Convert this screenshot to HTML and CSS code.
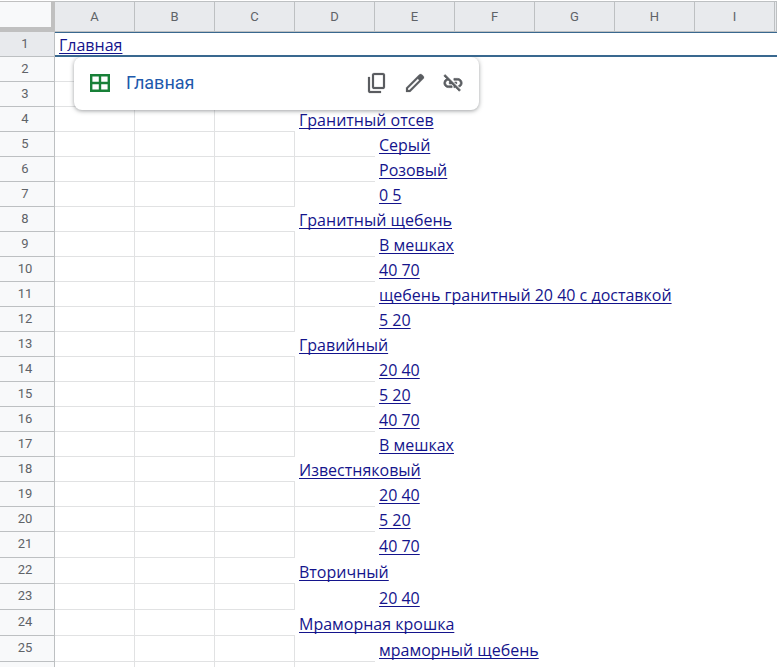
FILE: index.html
```html
<!DOCTYPE html>
<html lang="ru">
<head>
<meta charset="utf-8">
<title>Главная</title>
<link rel="stylesheet" href="styles.css">
</head>
<body>
<div class="sheet">
	<table class="grid">
		<colgroup>
			<col class="col-num">
			<col class="col"><col class="col"><col class="col"><col class="col"><col class="col">
			<col class="col"><col class="col"><col class="col"><col class="col"><col>
		</colgroup>
		<thead>
			<tr><td class="corner"></td><th>A</th><th>B</th><th>C</th><th>D</th><th>E</th><th>F</th><th>G</th><th>H</th><th>I</th><th></th></tr>
		</thead>
		<tbody>
			<tr class="selected"><th>1</th><td class="text" colspan="10"><a href="#">Главная</a></td></tr>
			<tr><th>2</th><td></td><td></td><td></td><td class="gap"></td><td class="text" colspan="6"></td></tr>
			<tr><th>3</th><td></td><td></td><td></td><td class="gap last"></td><td class="text" colspan="6"></td></tr>
			<tr><th>4</th><td></td><td></td><td class="open"></td><td class="text" colspan="7"><a href="#">Гранитный отсев</a></td></tr>
			<tr><th>5</th><td></td><td></td><td></td><td class="gap"></td><td class="text" colspan="6"><a href="#">Серый</a></td></tr>
			<tr><th>6</th><td></td><td></td><td></td><td class="gap"></td><td class="text" colspan="6"><a href="#">Розовый</a></td></tr>
			<tr><th>7</th><td></td><td></td><td></td><td class="gap last"></td><td class="text" colspan="6"><a href="#">0 5</a></td></tr>
			<tr><th>8</th><td></td><td></td><td class="open"></td><td class="text" colspan="7"><a href="#">Гранитный щебень</a></td></tr>
			<tr><th>9</th><td></td><td></td><td></td><td class="gap"></td><td class="text" colspan="6"><a href="#">В мешках</a></td></tr>
			<tr><th>10</th><td></td><td></td><td></td><td class="gap"></td><td class="text" colspan="6"><a href="#">40 70</a></td></tr>
			<tr><th>11</th><td></td><td></td><td></td><td class="gap"></td><td class="text" colspan="6"><a href="#">щебень гранитный 20 40 с доставкой</a></td></tr>
			<tr><th>12</th><td></td><td></td><td></td><td class="gap last"></td><td class="text" colspan="6"><a href="#">5 20</a></td></tr>
			<tr><th>13</th><td></td><td></td><td class="open"></td><td class="text" colspan="7"><a href="#">Гравийный</a></td></tr>
			<tr><th>14</th><td></td><td></td><td></td><td class="gap"></td><td class="text" colspan="6"><a href="#">20 40</a></td></tr>
			<tr><th>15</th><td></td><td></td><td></td><td class="gap"></td><td class="text" colspan="6"><a href="#">5 20</a></td></tr>
			<tr><th>16</th><td></td><td></td><td></td><td class="gap"></td><td class="text" colspan="6"><a href="#">40 70</a></td></tr>
			<tr><th>17</th><td></td><td></td><td></td><td class="gap last"></td><td class="text" colspan="6"><a href="#">В мешках</a></td></tr>
			<tr><th>18</th><td></td><td></td><td class="open"></td><td class="text" colspan="7"><a href="#">Известняковый</a></td></tr>
			<tr><th>19</th><td></td><td></td><td></td><td class="gap"></td><td class="text" colspan="6"><a href="#">20 40</a></td></tr>
			<tr><th>20</th><td></td><td></td><td></td><td class="gap"></td><td class="text" colspan="6"><a href="#">5 20</a></td></tr>
			<tr class="tall"><th>21</th><td></td><td></td><td></td><td class="gap last"></td><td class="text" colspan="6"><a href="#">40 70</a></td></tr>
			<tr class="tall"><th>22</th><td></td><td></td><td class="open"></td><td class="text" colspan="7"><a href="#">Вторичный</a></td></tr>
			<tr class="tall"><th>23</th><td></td><td></td><td></td><td class="gap last"></td><td class="text" colspan="6"><a href="#">20 40</a></td></tr>
			<tr class="tall"><th>24</th><td></td><td></td><td class="open"></td><td class="text" colspan="7"><a href="#">Мраморная крошка</a></td></tr>
			<tr class="tall"><th>25</th><td></td><td></td><td></td><td class="gap"></td><td class="text" colspan="6"><a href="#">мраморный щебень</a></td></tr>
			<tr class="tall"><th></th><td></td><td></td><td></td><td class="gap"></td><td class="text" colspan="6"></td></tr>
		</tbody>
	</table>

	<div class="link-card">
		<svg class="sheet-icon" viewBox="0 0 20 18" width="20" height="18"><path d="M1.2 1.2h17.6v15.6H1.2zM10 1v16M1 9h18"/></svg>
		<a class="link-title" href="#">Главная</a>
		<div class="actions">
			<button type="button" aria-label="Копировать ссылку">
				<svg viewBox="0 0 24 24" width="24" height="24"><path d="M9 18q-.82 0-1.41-.59T7 16V4q0-.82.59-1.41T9 2h9q.82 0 1.41.59T20 4v12q0 .82-.59 1.41T18 18zm0-2h9V4H9zm-4 6q-.82 0-1.41-.59T3 20V6h2v14h11v2z"/></svg>
			</button>
			<button type="button" aria-label="Изменить ссылку">
				<svg viewBox="0 0 24 24" width="24" height="24"><path d="M5 19h1.4L16.2 9.2 14.8 7.8 5 17.6zm-2 2v-4.25L16.2 3.57q.3-.27.66-.42T17.6 3q.4 0 .77.15t.65.45l1.38 1.4q.3.28.44.65T21 6.4q0 .4-.14.76t-.44.67L7.25 21z"/></svg>
			</button>
			<button type="button" aria-label="Удалить ссылку">
				<svg class="unlink" viewBox="0 0 24 24" width="22" height="22"><path d="M17 7h-4v1.9h4c1.71 0 3.1 1.39 3.1 3.1 0 1.43-.98 2.63-2.31 2.98l1.46 1.46C20.88 15.61 22 13.95 22 12c0-2.76-2.24-5-5-5zm-1 4h-2.19l2 2H16zM2 4.27l3.11 3.11A4.991 4.991 0 0 0 2 12c0 2.76 2.24 5 5 5h4v-1.9H7c-1.71 0-3.1-1.39-3.1-3.1 0-1.59 1.21-2.9 2.76-3.07L8.73 11H8v2h2.73L13 15.27V17h1.73l4.01 4L20.15 19.6 3.41 2.86z"/></svg>
			</button>
		</div>
	</div>
</div>
</body>
</html>
```
FILE: styles.css
```css
* {
	box-sizing: border-box;
}
body {
	margin: 0;
	background: #fff;
	font-family: Roboto, "Liberation Sans", sans-serif;
}
.sheet {
	position: relative;
	height: 100vh;
	padding-top: 1px;
	overflow: hidden;
}

/* grid */
.grid {
	width: 100%;
	table-layout: fixed;
	border-collapse: separate;
	border-spacing: 0;
}
.col-num {
	width: 55px;
}
.col {
	width: 80px;
}
th,
td {
	height: 25px;
	padding: 0;
	border: 0 solid #e1e2e3;
	border-width: 0 1px 1px 0;
}
.tall th,
.tall td {
	height: 26px;
}
th {
	border-color: #bdc0c2;
	background: #f8f9fa;
	color: #5f6368;
	font-size: 13px;
	line-height: 16px;
	font-weight: 400;
	text-align: center;
}
tbody th {
	padding: 0 4px 1px 0;
}
thead th {
	height: 31px;
	border-top-width: 1px;
	background: #e8eaed;
}
.corner {
	height: 31px;
	border-color: #c0c0c0;
	border-width: 1px 4px 5px 0;
	background: #f8f9fa;
}
.selected th {
	background: #e8eaed;
}
.open {
	border-right-width: 0;
}
.gap {
	border-right-width: 0;
}
.last {
	border-bottom-width: 0;
}
.text {
	padding: 0 0 2px 4px;
	border-width: 0;
	font-family: "Open Sans", "Noto Sans", sans-serif;
	font-size: 16px;
	line-height: 20px;
	vertical-align: bottom;
	white-space: nowrap;
}
.selected .text {
	padding-bottom: 0;
	border-color: #39688f;
	border-width: 1px 0 2px;
}
.text a {
	color: #14148c;
	text-decoration: underline;
	text-decoration-thickness: 1px;
	text-underline-offset: 2px;
	text-decoration-skip-ink: none;
}

/* link preview */
.link-card {
	position: absolute;
	top: 57px;
	left: 74px;
	display: flex;
	align-items: center;
	width: 405px;
	height: 53px;
	padding: 0 14px 1px 16px;
	border-radius: 8px;
	background: #fff;
	box-shadow: 0 1px 4px rgba(60, 64, 67, 0.5);
	clip-path: inset(0 -8px -8px -8px);
}
.sheet-icon {
	fill: none;
	stroke: #188038;
	stroke-width: 2.4;
}
.link-title {
	margin-left: 16px;
	color: #2059ac;
	font-size: 18px;
	line-height: 24px;
	text-decoration: none;
}
.actions {
	display: flex;
	gap: 14px;
	margin-left: auto;
}
.actions button {
	display: flex;
	align-items: center;
	justify-content: center;
	width: 24px;
	height: 24px;
	padding: 0;
	border: 0;
	background: none;
}
.actions svg {
	fill: #5a5d61;
	stroke: #5a5d61;
	stroke-width: 0.2;
}
.actions .unlink {
	stroke-width: 0.8;
}
```
